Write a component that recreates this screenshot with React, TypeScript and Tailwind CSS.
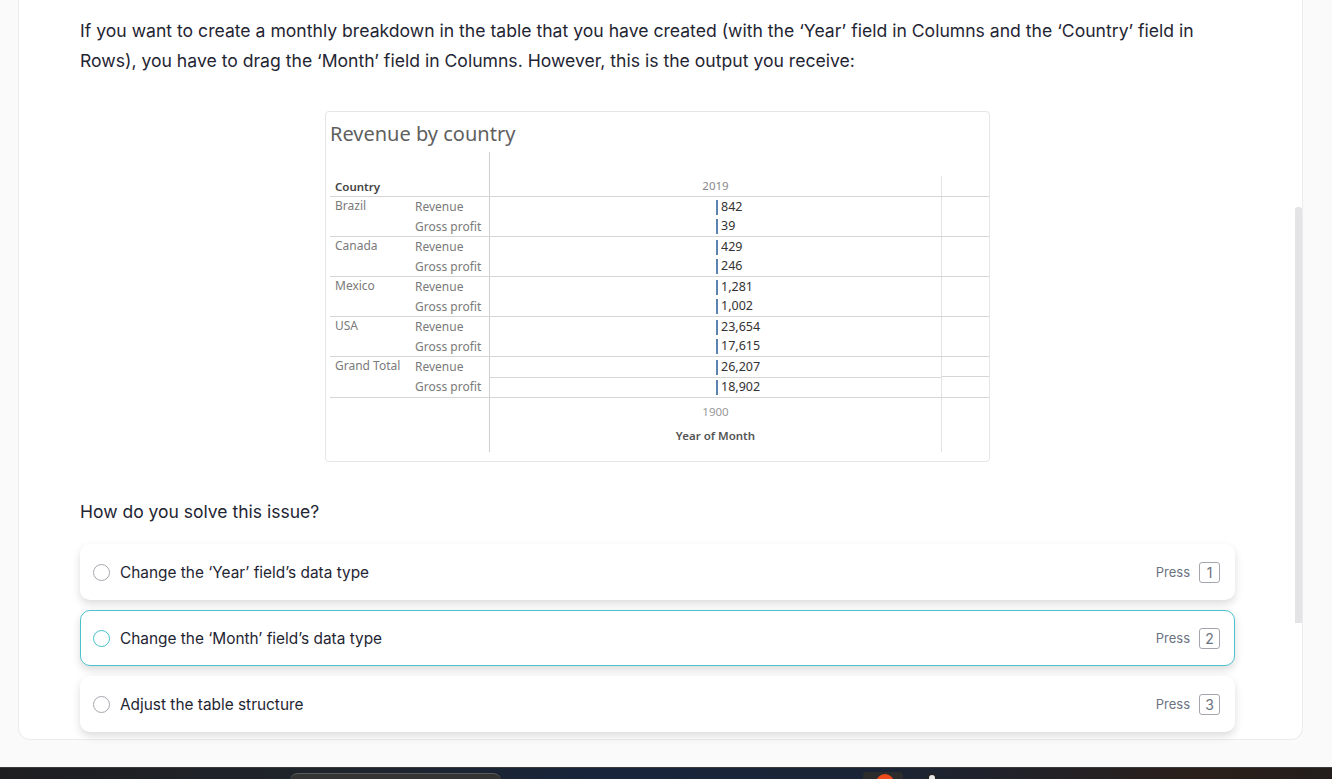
import React from 'react'

const groups = [
  { country: 'Brazil', values: ['842', '39'] },
  { country: 'Canada', values: ['429', '246'] },
  { country: 'Mexico', values: ['1,281', '1,002'] },
  { country: 'USA', values: ['23,654', '17,615'] },
  { country: 'Grand Total', values: ['26,207', '18,902'], total: true },
]

const options = [
  { label: 'Change the ‘Year’ field’s data type', key: '1' },
  { label: 'Change the ‘Month’ field’s data type', key: '2', active: true },
  { label: 'Adjust the table structure', key: '3' },
]

function ValueCell({ value, short }: { value: string; short?: boolean }) {
  return (
    <div className={(short ? 'h-[19px]' : 'h-[20px]') + ' flex items-center pl-[226px]'}>
      <div className="w-[2px] h-[15px] bg-[#5b84b1]" />
      <span className="ml-[3px] text-[12.5px] text-[#333]">{value}</span>
    </div>
  )
}

function RevenueChart() {
  return (
    <div className="w-[665px] h-[351px] mx-auto border border-[#e6e6e6] rounded-[4px] bg-white font-['Noto_Sans',sans-serif] pl-[4px]">
      <div className="pt-[8px] h-[40px] text-[20px] text-[#5f5f5f] leading-[28px]">
        Revenue by country
      </div>

      <div className="flex">
        {/* left header column */}
        <div className="w-[160px] border-r border-[#cfcfcf]">
          <div className="h-[44px] flex items-end pl-[5px] pb-[1px] text-[11.5px] font-semibold text-[#444]">
            Country
          </div>
        </div>
        <div className="flex-1 flex flex-col">
          <div className="h-[24px]" />
          <div className="flex h-[20px]">
            <div className="w-[452px] border-r border-[#e3e3e3] text-center text-[11.5px] text-[#888] leading-[20px]">
              2019
            </div>
            <div className="flex-1" />
          </div>
        </div>
      </div>

      <div className="border-t border-[#d6d6d6]">
        {groups.map((g) => (
          <div key={g.country} className="flex border-b border-[#d6d6d6]">
            <div className="w-[160px] border-r border-[#cfcfcf] flex text-[12px] text-[#7a7a7a]">
              <div className="w-[85px] pl-[5px] leading-[18px]">{g.country}</div>
              <div className="flex flex-col">
                <div className="h-[20px] leading-[20px]">Revenue</div>
                <div className="h-[19px] leading-[20px]">Gross profit</div>
              </div>
            </div>
            <div className="flex-1 flex">
              <div className="w-[452px] border-r border-[#e3e3e3] flex flex-col">
                <div className={g.total ? 'border-b border-[#d6d6d6]' : ''}>
                  <ValueCell value={g.values[0]} />
                </div>
                <ValueCell value={g.values[1]} short />
              </div>
              <div className={'flex-1 ' + (g.total ? 'flex flex-col' : '')}>
                {g.total && <div className="h-[20px] border-b border-[#d6d6d6]" />}
              </div>
            </div>
          </div>
        ))}
      </div>

      <div className="flex h-[54px]">
        <div className="w-[160px] border-r border-[#cfcfcf]" />
        <div className="w-[452px] border-r border-[#e3e3e3] flex flex-col items-center">
          <div className="mt-[5px] text-[11.5px] text-[#999] leading-[18px]">1900</div>
          <div className="mt-[6px] text-[11.5px] font-semibold text-[#555] leading-[18px]">Year of Month</div>
        </div>
      </div>
    </div>
  )
}

export default function App() {
  return (
    <div className="w-[1332px] h-[779px] bg-[#fafafa] flex flex-col overflow-hidden font-['Inter',sans-serif]">
      <div className="flex-1 px-[18px] pr-[29px]">
        <div className="relative h-[740px] bg-white border border-t-0 border-[#ececec] rounded-b-[12px] pl-[61px] pr-[67px]">
          <p className="pt-[16px] text-[17.6px] leading-[30px] text-[#1f2533]">
            If you want to create a monthly breakdown in the table that you have created (with the ‘Year’ field in Columns and the ‘Country’ field in Rows), you have to drag the ‘Month’ field in Columns. However, this is the output you receive:
          </p>

          <div className="mt-[35px]">
            <RevenueChart />
          </div>

          <p className="mt-[35px] text-[17.5px] leading-[30px] text-[#1f2533]">How do you solve this issue?</p>

          <div className="mt-[17px] flex flex-col gap-[10px]">
            {options.map((o) => (
              <div
                key={o.key}
                className={
                  'h-[56px] rounded-[10px] bg-white flex items-center pt-[1px] pl-[12px] pr-[14px] shadow-[0_4px_9px_rgba(0,0,0,0.14)] border ' +
                  (o.active ? 'border-[#4fc1cc]' : 'border-transparent')
                }
              >
                <div
                  className={
                    'w-[17px] h-[17px] rounded-full border-[1.5px] ' +
                    (o.active ? 'border-[#47bfcb]' : 'border-[#a3a7ad]')
                  }
                />
                <span className="ml-[10px] text-[15.4px] text-[#1f2533]">{o.label}</span>
                <div className="ml-auto flex items-center gap-[9px]">
                  <span className="text-[13px] text-[#6b7280]">Press</span>
                  <span className="w-[21px] h-[21px] rounded-[3px] border border-[#a3a7ad] flex items-center justify-center text-[14px] text-[#6b7280]">
                    {o.key}
                  </span>
                </div>
              </div>
            ))}
          </div>

          {/* scrollbar */}
          <div className="absolute right-[0px] top-[207px] w-[7px] h-[416px] rounded-t-[3px] bg-[#e4e4e7]" />
        </div>
      </div>

      {/* dock strip */}
      <div className="h-[12px] border-t border-[#3b3b3b] bg-[linear-gradient(90deg,#1e1e20_0%,#1f242c_25%,#17243a_45%,#1a2436_65%,#2a1f1a_90%,#231e1c_100%)] relative">
        <div className="absolute left-[290px] top-[5px] w-[211px] h-[10px] rounded-t-[8px] bg-[#343434] border-t border-[#5a5a5a]" />
        <div className="absolute left-[863px] top-[4px] w-[40px] h-[10px] rounded-t-[4px] bg-[#2c2c2c]" />
        <div className="absolute left-[876px] top-[6px] w-[18px] h-[18px] rounded-full bg-[#ee4b1c]" />
        <div className="absolute left-[927px] top-[5px] w-[10px] h-[10px] rounded-full bg-[#e8e8e8] border-[2px] border-[#222]" />
      </div>
    </div>
  )
}
